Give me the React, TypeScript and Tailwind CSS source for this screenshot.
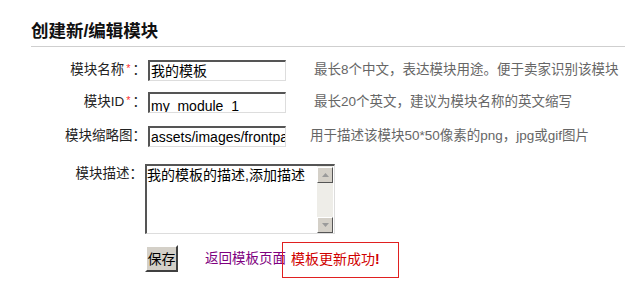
export default function App() {
  const inputBox =
    'ml-[2px] w-[138px] h-[21px] overflow-hidden whitespace-nowrap border-t-2 border-l-2 border-t-[#555] border-l-[#555] border-r border-b border-r-[#ddd] border-b-[#ddd] bg-white text-[14px] text-black pl-[1px]';

  return (
    <div className="w-[628px] h-[297px] bg-white pl-[31px] pt-[21px] font-['Liberation_Sans','Noto_Sans_CJK_SC',sans-serif] text-[#222]">
      <h2 className="w-[594px] border-b border-[#cfcfcf] pb-[5px] text-[17.5px] leading-[20px] font-bold text-[#111]">
        创建新/编辑模块
      </h2>

      {/* 模块名称 */}
      <div className="mt-[13px] flex items-center h-[21px]">
        <div className="w-[115px] text-right text-[13.5px]">
          模块名称<span className="text-[#f33] text-[11px] align-top px-[2px]">*</span>：
        </div>
        <div className={`${inputBox} leading-[19px]`}>我的模板</div>
        <div className="ml-[28px] text-[13.5px] text-[#666]">最长8个中文，表达模块用途。便于卖家识别该模块</div>
      </div>

      {/* 模块ID */}
      <div className="mt-[11px] flex items-center h-[21px]">
        <div className="w-[115px] text-right text-[13.5px]">
          模块ID<span className="text-[#f33] text-[11px] align-top px-[2px]">*</span>：
        </div>
        <div className={`${inputBox} leading-[24px]`}>my_module_1</div>
        <div className="ml-[28px] text-[13.5px] text-[#666]">最长20个英文，建议为模块名称的英文缩写</div>
      </div>

      {/* 模块缩略图 */}
      <div className="mt-[13px] flex items-center h-[21px]">
        <div className="w-[115px] text-right text-[13.5px]">模块缩略图：</div>
        <input
          readOnly
          value="assets/images/frontpage/module.png"
          className={`${inputBox} leading-[19px] outline-none`}
        />
        <div className="ml-[24px] text-[13.5px] text-[#666]">用于描述该模块50*50像素的png，jpg或gif图片</div>
      </div>

      {/* 模块描述 */}
      <div className="mt-[17px] flex items-start">
        <div className="w-[112px] text-right text-[13.5px] leading-[18px] pt-[1px]">模块描述：</div>
        <div className="ml-[2px] w-[190px] h-[70px] flex border-t-2 border-l-2 border-t-[#555] border-l-[#555] border-r border-b border-r-[#ddd] border-b-[#ddd] bg-white">
          <div className="flex-1 text-[14px] leading-[18px] text-black">我的模板的描述,添加描述</div>
          <div className="w-[16px] mr-[1px] flex flex-col bg-[#eeede8] pt-[1px]">
            <div className="h-[16px] bg-[#d4d0c8] border border-t-white border-l-white border-r-[#555] border-b-[#555] flex items-center justify-center">
              <svg width="7" height="4" viewBox="0 0 7 4">
                <path d="M0 4 L3.5 0 L7 4 Z" fill="#9a9a9a" />
              </svg>
            </div>
            <div className="flex-1" />
            <div className="h-[16px] bg-[#d4d0c8] border border-t-white border-l-white border-r-[#555] border-b-[#555] flex items-center justify-center">
              <svg width="7" height="4" viewBox="0 0 7 4">
                <path d="M0 0 L3.5 4 L7 0 Z" fill="#9a9a9a" />
              </svg>
            </div>
          </div>
        </div>
      </div>

      {/* actions */}
      <div className="mt-[8px] flex items-start pl-[114px]">
        <button className="mt-[3px] w-[33px] h-[27px] bg-[#d4d0c8] border-2 border-t-white border-l-white border-r-[#404040] border-b-[#404040] text-[14px] text-black leading-none p-0">
          保存
        </button>
        <a className="ml-[27px] mt-[8px] text-[13.5px] leading-[18px] text-[#800080] cursor-pointer">返回模板页面</a>
        <div className="-ml-[4px] w-[117px] h-[36px] border border-[#e02020] flex items-center pl-[8px] pb-[2px] text-[14px] text-[#d00000]">
          模板更新成功<span className="font-bold">!</span>
        </div>
      </div>
    </div>
  );
}
